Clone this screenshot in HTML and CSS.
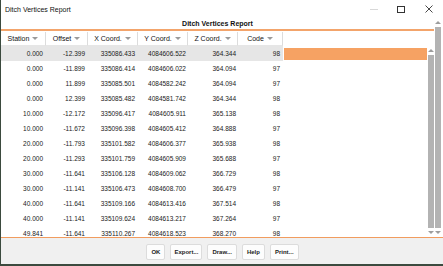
FILE: index.html
```html
<!DOCTYPE html>
<html lang="en">
<head>
    <meta charset="UTF-8">
    <title>Ditch Vertices Report</title>
    <link rel="stylesheet" href="styles.css">
</head>
<body>
    <div class="window">
        <div class="titlebar">
            <span class="caption">Ditch Vertices Report</span>
            <div class="winbtns">
                <span class="minimize"></span>
                <span class="maximize"></span>
                <svg class="close" width="8" height="8" viewBox="0 0 8 8"><path d="M0.5 0.5L7.5 7.5M7.5 0.5L0.5 7.5" stroke="#333" stroke-width="0.9" fill="none"/></svg>
            </div>
        </div>
        <div class="report">
            <div class="report-main">
                <div class="report-title">Ditch Vertices Report</div>
                <div class="grid-head">
                    <div class="hcell">Station<i class="sort"></i></div>
                    <div class="hcell">Offset<i class="sort"></i></div>
                    <div class="hcell">X Coord.<i class="sort"></i></div>
                    <div class="hcell">Y Coord.<i class="sort"></i></div>
                    <div class="hcell">Z Coord.<i class="sort"></i></div>
                    <div class="hcell">Code<i class="sort"></i></div>
                    <div class="hfill"></div>
                </div>
                <div class="grid-body">
                    <div class="rows">
                        <div class="row selected"><span>0.000</span><span>-12.399</span><span>335086.433</span><span>4084606.522</span><span>364.344</span><span>98</span><b class="pick"></b></div>
                        <div class="row"><span>0.000</span><span>-11.899</span><span>335086.414</span><span>4084606.022</span><span>364.094</span><span>97</span></div>
                        <div class="row"><span>0.000</span><span>11.899</span><span>335085.501</span><span>4084582.242</span><span>364.094</span><span>97</span></div>
                        <div class="row"><span>0.000</span><span>12.399</span><span>335085.482</span><span>4084581.742</span><span>364.344</span><span>98</span></div>
                        <div class="row"><span>10.000</span><span>-12.172</span><span>335096.417</span><span>4084605.911</span><span>365.138</span><span>98</span></div>
                        <div class="row"><span>10.000</span><span>-11.672</span><span>335096.398</span><span>4084605.412</span><span>364.888</span><span>97</span></div>
                        <div class="row"><span>20.000</span><span>-11.793</span><span>335101.582</span><span>4084606.377</span><span>365.938</span><span>98</span></div>
                        <div class="row"><span>20.000</span><span>-11.293</span><span>335101.759</span><span>4084605.909</span><span>365.688</span><span>97</span></div>
                        <div class="row"><span>30.000</span><span>-11.641</span><span>335106.128</span><span>4084609.062</span><span>366.729</span><span>98</span></div>
                        <div class="row"><span>30.000</span><span>-11.141</span><span>335106.473</span><span>4084608.700</span><span>366.479</span><span>97</span></div>
                        <div class="row"><span>40.000</span><span>-11.641</span><span>335109.166</span><span>4084613.416</span><span>367.514</span><span>98</span></div>
                        <div class="row"><span>40.000</span><span>-11.141</span><span>335109.624</span><span>4084613.217</span><span>367.264</span><span>97</span></div>
                        <div class="row"><span>49.841</span><span>-11.641</span><span>335110.267</span><span>4084618.523</span><span>368.270</span><span>98</span></div>
                    </div>
                    <div class="vscroll inner">
                        <i class="arrow up"></i>
                        <div class="thumb"></div>
                        <i class="arrow down"></i>
                    </div>
                </div>
            </div>
            <div class="vscroll outer">
                <i class="arrow up"></i>
                <div class="thumb"></div>
                <i class="arrow down"></i>
            </div>
        </div>
        <div class="buttons">
            <button>OK</button>
            <button>Export...</button>
            <button>Draw...</button>
            <button>Help</button>
            <button>Print...</button>
        </div>
    </div>
</body>
</html>
```

FILE: styles.css
```css
* {
    box-sizing: border-box;
}
body {
    margin: 0;
    width: 443px;
    height: 266px;
    overflow: hidden;
    background: #3b4a3e;
    font-family: "Liberation Sans", Arial, sans-serif;
    font-size: 7px;
    color: #111;
}
.window {
    display: flex;
    flex-direction: column;
    width: 442px;
    height: 264px;
    margin-left: 1px;
    background: #ffffff;
}
.titlebar {
    display: flex;
    align-items: center;
    justify-content: space-between;
    height: 18px;
    padding-left: 4px;
    color: #111;
}
.winbtns {
    display: flex;
    align-items: center;
    height: 18px;
}
.minimize {
    width: 8px;
    height: 1px;
    background: #d8d8d8;
    margin-right: 19px;
}
.maximize {
    width: 8px;
    height: 7px;
    border: 1px solid #333;
    margin-right: 20px;
}
.close {
    margin-right: 10px;
}
.report {
    display: flex;
    height: 220px;
    border-bottom: 1px solid #f19c5f;
}
.report-main {
    display: flex;
    flex-direction: column;
    width: 433px;
}
.report-title {
    height: 11px;
    line-height: 11px;
    text-align: center;
    font-weight: bold;
    border-bottom: 2px solid #f3a46b;
    box-sizing: content-box;
}
.grid-head {
    display: grid;
    grid-template-columns: 45px 42px 50px 50px 50px 45px 1fr;
    height: 14px;
    margin-top: 1px;
}
.hcell {
    display: flex;
    align-items: center;
    justify-content: center;
    gap: 3px;
    border-right: 1px solid #dcdcdc;
    border-bottom: 1px solid #e6e6e6;
    font-size: 7px;
    color: #111;
}
.hfill {
    border-bottom: 1px solid #ffffff;
}
.sort {
    width: 0;
    height: 0;
    border-left: 3px solid transparent;
    border-right: 3px solid transparent;
    border-top: 3px solid #9a9a9a;
}
.grid-body {
    display: flex;
    flex: 1;
    min-height: 0;
}
.rows {
    flex: 1;
    overflow: hidden;
}
.row {
    display: grid;
    grid-template-columns: 45px 42px 50px 50px 50px 45px 1fr;
    height: 15px;
    align-items: center;
    font-size: 6.5px;
    color: #222;
}
.row span {
    text-align: right;
    padding-right: 2px;
}
.row span:nth-child(1),
.row span:nth-child(2),
.row span:nth-child(3) {
    padding-right: 3px;
}
.row span:nth-child(6) {
    padding-right: 3px;
}
.selected {
    background: linear-gradient(to right, #e6e6e6 282px, #ffffff 282px);
}
.pick {
    display: block;
    height: 12px;
    margin-left: 1px;
    background: #f6a263;
}
.vscroll {
    display: flex;
    flex-direction: column;
    align-items: center;
    width: 7px;
}
.vscroll.outer {
    width: 8px;
    padding-right: 1px;
}
.vscroll .thumb {
    flex: 1;
    width: 6px;
    background: #b3b3b3;
}
.arrow {
    width: 0;
    height: 0;
    margin: 3px 0;
    border-left: 3px solid transparent;
    border-right: 3px solid transparent;
}
.arrow.up {
    border-bottom: 3px solid #9d9d9d;
}
.arrow.down {
    border-top: 3px solid #9d9d9d;
}
.buttons {
    display: flex;
    flex: 1;
    align-items: center;
    justify-content: center;
    gap: 5px;
    background: #f0f0f0;
    padding-left: 1px;
    padding-top: 1px;
}
.buttons button {
    height: 16px;
    padding: 0 4px;
    font-family: inherit;
    font-size: 6px;
    font-weight: bold;
    color: #222;
    background: #fdfdfd;
    border: 1px solid #dcdcdc;
    border-radius: 2px;
}
.buttons button:nth-child(2) {
    padding: 0 3px;
}
```
